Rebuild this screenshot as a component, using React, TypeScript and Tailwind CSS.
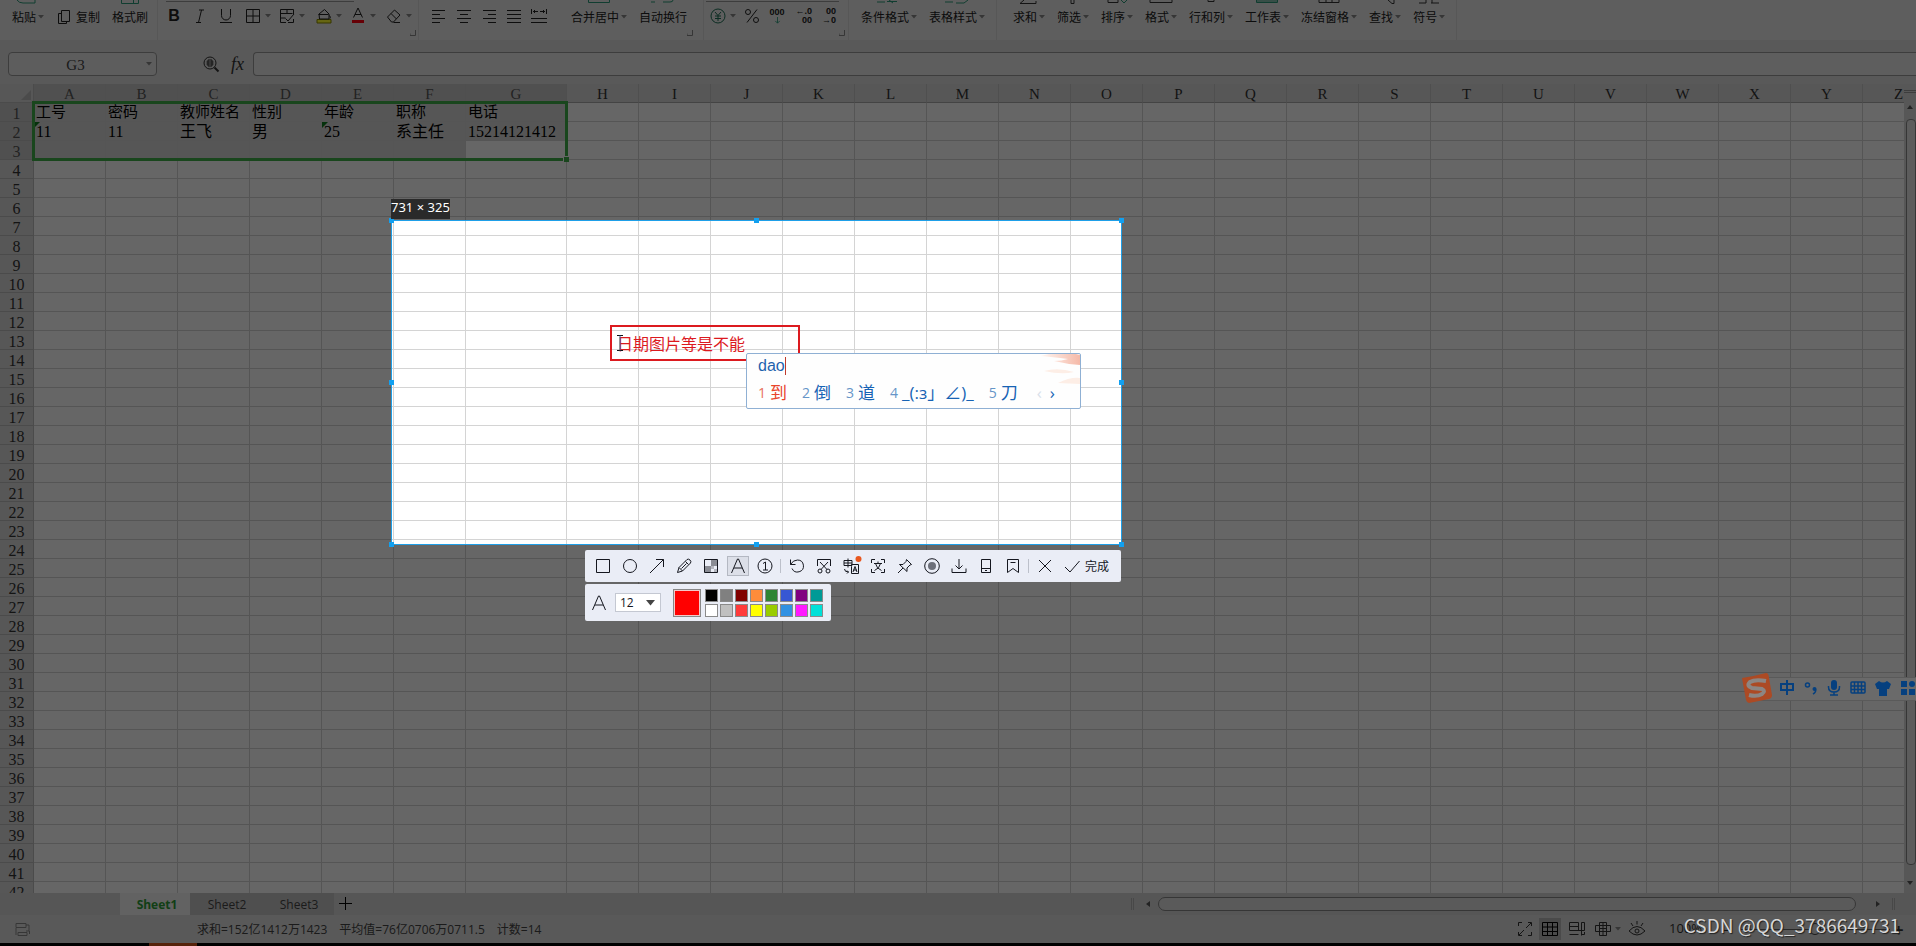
import type { ReactNode } from "react";

const columns = "ABCDEFGHIJKLMNOPQRSTUVWXYZ".split("");
const rowCount = 42;

const cells: Record<string, string> = {
  A1: "工号",
  B1: "密码",
  C1: "教师姓名",
  D1: "性别",
  E1: "年龄",
  F1: "职称",
  G1: "电话",
  A2: "11",
  B2: "11",
  C2: "王飞",
  D2: "男",
  E2: "25",
  F2: "系主任",
  G2: "15214121412",
};

const textNumbers = ["A2", "E2"];

const swatches = [
  "bg-black",
  "bg-[#808080]",
  "bg-[#800000]",
  "bg-[#ff8c3a]",
  "bg-[#2e8533]",
  "bg-[#3757d3]",
  "bg-[#800080]",
  "bg-[#009a96]",
  "bg-white",
  "bg-[#c0c0c0]",
  "bg-[#ff3b3b]",
  "bg-[#ffff00]",
  "bg-[#99cc00]",
  "bg-[#3191e2]",
  "bg-[#ff19ff]",
  "bg-[#00e0d8]",
];

type IconProps = { children: ReactNode; size?: number; className?: string };

const Icon = ({ children, size = 16, className = "" }: IconProps) => (
  <svg
    width={size}
    height={size}
    viewBox="0 0 16 16"
    fill="none"
    stroke="currentColor"
    strokeWidth="1"
    className={`shrink-0 overflow-visible ${className}`}
  >
    {children}
  </svg>
);

const Arrow = () => (
  <svg width="6" height="4" viewBox="0 0 6 4" className="shrink-0 fill-[#888]">
    <path d="M0 0h6L3 3.500z" />
  </svg>
);

const Corner = () => (
  <svg width="6" height="6" viewBox="0 0 6 6" fill="none" stroke="#888" className="mb-1 shrink-0 self-end">
    <path d="M0 3.500V5.500H5.500V0" />
  </svg>
);

const Divider = () => <div className="h-10 w-px shrink-0 bg-[#dadada]" />;

type TallProps = { label: string; arrow?: boolean; children?: ReactNode };

const Tall = ({ label, arrow = true, children }: TallProps) => (
  <button className="flex h-10 shrink-0 flex-col">
    <svg width="24" height="4" viewBox="0 0 24 4" fill="none" stroke="#333" className="self-center">
      {children}
    </svg>
    <span className="mt-1 flex items-center gap-0.5 leading-[18px] whitespace-nowrap">
      {label}
      {arrow && <Arrow />}
    </span>
  </button>
);

type ToolProps = { label: string; width: string; arrow?: boolean; children: ReactNode };

const Tool = ({ label, width, arrow, children }: ToolProps) => (
  <button aria-label={label} className={`flex h-7 shrink-0 items-center gap-1 ${width}`}>
    {children}
    {arrow && <Arrow />}
  </button>
);

const Ribbon = () => (
  <div className="flex h-10 shrink-0 overflow-hidden bg-[#ebebeb] text-xs text-[#222]">
    <div className="flex w-[157px] shrink-0 pl-3">
      <Tall label="粘贴">
        <path d="M1 0q2 3 6 3h12V0" stroke="#2a9a78" />
      </Tall>
      <button className="ml-3 flex h-[34px] items-center gap-1">
        <Icon>
          <path d="M5.500 1.500h8v11h-8zM5.500 4.500h-3v10h8v-2" />
        </Icon>
        复制
      </button>
      <div className="ml-3">
        <Tall label="格式刷" arrow={false}>
          <path d="M3.500 0v3.500h17V0M15.500 0v3" stroke="#2a9a78" />
        </Tall>
      </div>
    </div>
    <Divider />
    <div className="flex w-[260px] shrink-0">
      <div className="flex w-[252px] shrink-0 flex-col pl-2">
        <div className="h-[2px] w-[188px] shrink-0 border-b border-[#999]" />
        <div className="flex w-[250px]">
          <Tool label="加粗" width="w-[26px]">
            <b className="w-4 text-center font-['Liberation_Sans'] text-base">B</b>
          </Tool>
          <Tool label="倾斜" width="w-[26px]">
            <Icon>
              <path d="M7 2h5M4 14.500h5M9.500 2l-3 12.500" />
            </Icon>
          </Tool>
          <Tool label="下划线" width="w-[27px]">
            <Icon>
              <path d="M3.500 1v6.500a4.500 4.500 0 0 0 9 0V1M2 14.500h12" />
            </Icon>
          </Tool>
          <Tool label="边框" width="w-[34px]" arrow>
            <Icon>
              <path d="M1.500 1.500h13v13h-13zM8 1.500v13M1.500 8h13" />
            </Icon>
          </Tool>
          <Tool label="单元格样式" width="w-[37px]" arrow>
            <Icon>
              <path d="M14.500 6V1.500H1.500v13H7M1.500 5.500h12M1.500 10h5M8 1.500v4M15 6l-6 7-2.500-2.500M9 14.500h5.500V11" />
            </Icon>
          </Tool>
          <Tool label="填充颜色" width="w-[34px]" arrow>
            <Icon>
              <path d="M1 11.500h14v3.500H1z" fill="#ffff30" stroke="#888800" />
              <path d="M3 6l5.500-4.500 4.500 4.500v5H3.500zM2.500 6.500h10M13.500 7.500q1.500 2 .5 3" />
            </Icon>
          </Tool>
          <Tool label="字体颜色" width="w-[36px]" arrow>
            <Icon>
              <path d="M3.500 9.500L8 0l4.500 9.500M5 6.500h6" />
              <path d="M2 12h12v3H2z" fill="#ff0010" stroke="none" />
            </Icon>
          </Tool>
          <Tool label="清除" width="w-[27px]" arrow>
            <Icon>
              <path d="M1.500 9L8.500 2l5.500 5-6.500 7H5.500zM5 5.500l5.500 5.500M7.500 14.500H14" />
            </Icon>
          </Tool>
        </div>
      </div>
      <Corner />
    </div>
    <Divider />
    <div className="flex w-[284px] shrink-0">
      <div className="flex w-[152px] shrink-0 pt-0.5 pl-3">
        <Tool label="左对齐" width="w-[25px]">
          <Icon>
            <path d="M1 2.500h13M1 6.500h8M1 10.500h13M1 14.500h8" />
          </Icon>
        </Tool>
        <Tool label="居中" width="w-[25px]">
          <Icon>
            <path d="M1 2.500h14M4 6.500h8M1 10.500h14M4 14.500h8" />
          </Icon>
        </Tool>
        <Tool label="右对齐" width="w-[25px]">
          <Icon>
            <path d="M2 2.500h13M7 6.500h8M2 10.500h13M7 14.500h8" />
          </Icon>
        </Tool>
        <Tool label="两端对齐" width="w-[25px]">
          <Icon>
            <path d="M1 2.500h14M1 6.500h14M1 10.500h14M1 14.500h14" />
          </Icon>
        </Tool>
        <Tool label="分散对齐" width="w-[25px]">
          <Icon>
            <path d="M.5 1v5M15.500 1v5M2 3.500h5M9 3.500h5M4 2L2.500 3.500 4 5M12 2l1.500 1.500L12 5M0 10.500h16M0 14.500h16" />
          </Icon>
        </Tool>
      </div>
      <Tall label="合并居中">
        <path d="M1.500 0v2.500h21V0" stroke="#2a9a78" />
      </Tall>
      <div className="ml-3 w-12">
        <Tall label="自动换行" arrow={false}>
          <path d="M0 2h4M12 2h7q3 0 3-2" stroke="#2a9a78" />
        </Tall>
      </div>
      <Corner />
    </div>
    <Divider />
    <div className="flex w-[144px] shrink-0">
      <div className="flex w-[135px] shrink-0 flex-col pl-0.5">
        <div className="h-[2px] shrink-0 border-b border-[#999]" />
        <div className="flex pl-1">
          <Tool label="货币" width="w-[34px]" arrow>
            <Icon className="text-[#1d6e55]">
              <circle cx="8" cy="8" r="7" />
              <path d="M5 4l3 3.500L11 4M8 7.500V13M5 8h6M5 10.500h6" />
            </Icon>
          </Tool>
          <Tool label="百分比" width="w-[22px]">
            <Icon>
              <path d="M13 1.500L3 14.500" />
              <circle cx="4" cy="4" r="2.500" />
              <circle cx="12" cy="12" r="2.500" />
            </Icon>
          </Tool>
          <button className="flex h-7 w-[22px] flex-col items-center justify-center font-['Liberation_Sans'] text-[9px] leading-[9px] font-bold">
            <span>000</span>
            <Icon size={7} className="text-[#2a9a78]">
              <path d="M8 0v14M3 9l5 5 5-5" strokeWidth="2" />
            </Icon>
          </button>
          <button className="flex h-7 w-6 flex-col items-end justify-center font-['Liberation_Sans'] text-[9px] leading-[9px] font-bold">
            <span>←.0</span>
            <span>00</span>
          </button>
          <button className="flex h-7 w-6 flex-col items-end justify-center font-['Liberation_Sans'] text-[9px] leading-[9px] font-bold">
            <span>00</span>
            <span>→0</span>
          </button>
        </div>
      </div>
      <Corner />
    </div>
    <Divider />
    <div className="flex w-[147px] shrink-0 gap-3 pl-3">
      <Tall label="条件格式">
        <path d="M0 2h8M10 1.500h10M12 0l4 3" stroke="#2a9a78" />
      </Tall>
      <Tall label="表格样式">
        <path d="M0 2h8M11 3h8l4-3" stroke="#2a9a78" />
      </Tall>
    </div>
    <Divider />
    <div className="flex w-[459px] shrink-0 gap-3 pl-4">
      <Tall label="求和">
        <path d="M7 0L3 3.500h16V1" />
      </Tall>
      <Tall label="筛选">
        <path d="M10 0v3.500h3V0" />
      </Tall>
      <Tall label="排序">
        <path d="M3 0v2.500h10V0" />
        <path d="M16 0l3 3 3-3" stroke="#2a9a78" />
      </Tall>
      <Tall label="格式">
        <path d="M1 0v2.500h22V0" />
      </Tall>
      <Tall label="行和列">
        <path d="M9 0v1.500h6V0" />
      </Tall>
      <Tall label="工作表">
        <path d="M1.500 0v2.500h21V0M1 1h22" stroke="#2a9a78" />
      </Tall>
      <Tall label="冻结窗格">
        <path d="M2 0v2.500h20V0M9 0v2M15 0v2" />
      </Tall>
      <Tall label="查找">
        <path d="M15 0l4 3.500h2V0" />
      </Tall>
      <Tall label="符号">
        <path d="M2 3h7V0M14 3h8M15 3V0" />
      </Tall>
    </div>
    <Divider />
  </div>
);

const FormulaBar = () => (
  <div className="flex h-11 shrink-0 items-center bg-[#dedede] pt-1 pl-2 text-[#333]">
    <div className="flex h-6 w-[149px] items-center rounded border border-[#999] bg-[#e8e8e8] pr-1">
      <input
        aria-label="名称框"
        defaultValue="G3"
        className="w-0 flex-1 pt-0.5 pr-1 text-center font-['Liberation_Serif'] text-[15px] text-[#444] outline-none"
      />
      <Arrow />
    </div>
    <button aria-label="浏览公式" className="ml-[46px]">
      <Icon>
        <circle cx="7" cy="7" r="6" />
        <path d="M11.500 11.500l4 4" strokeWidth="2" />
        <path d="M3.500 6h7M3.500 8h7M5 4h4v6H5z" />
      </Icon>
    </button>
    <button className="ml-3 w-[22px] text-left font-['Liberation_Serif'] text-lg leading-5 italic">fx</button>
    <input
      aria-label="编辑栏"
      className="h-6 min-w-0 flex-1 rounded-l border border-r-0 border-[#999] bg-[#ececec] outline-none"
    />
  </div>
);

const isSelected = (column: string, row: number) => row <= 3 && column <= "G" && !(column === "G" && row === 3);

const Sheet = () => (
  <div className="flex min-h-0 flex-1 bg-[#dadada]">
    <div className="relative min-w-0 flex-1 overflow-hidden">
      <table className="w-[1935px] table-fixed border-separate border-spacing-0 bg-white">
        <colgroup>
          <col className="w-[34px]" />
          {columns.map((column) => (
            <col key={column} className={column === "G" ? "w-[101px]" : "w-[72px]"} />
          ))}
        </colgroup>
        <thead>
          <tr className="font-['Liberation_Serif'] text-[15px] leading-4 text-[#333]">
            <th className="h-[19px] border-r border-b border-[#bbb] bg-[#dadada] p-0">
              <svg width="10" height="10" viewBox="0 0 10 10" className="mt-1 mr-0.5 ml-auto fill-[#bbb]">
                <path d="M10 0v10H0z" />
              </svg>
            </th>
            {columns.map((column) => (
              <th
                key={column}
                className={`h-[19px] border-r border-b border-r-[#c6c6c6] border-b-[#aaa] p-0 pt-0.5 font-normal ${
                  column <= "G" ? "bg-[#c8c8c8] text-[#555]" : "bg-[#dadada]"
                }`}
              >
                {column}
              </th>
            ))}
          </tr>
        </thead>
        <tbody>
          {Array.from({ length: rowCount }, (_, index) => index + 1).map((row) => (
            <tr key={row}>
              <th
                className={`h-[19px] border-r border-b border-[#bbb] p-0 pt-1 font-['Liberation_Serif'] text-base leading-[14px] font-normal ${
                  row <= 3 ? "bg-[#c8c8c8] text-[#555]" : "bg-[#dadada] text-[#333]"
                }`}
              >
                {row}
              </th>
              {columns.map((column) => {
                const id = column + row;
                return (
                  <td
                    key={id}
                    className={`relative h-[19px] border-r border-b border-[#d4d4d4] p-0 pl-0.5 font-['Liberation_Serif','Noto_Sans_CJK_SC',serif] leading-4 whitespace-nowrap ${
                      row === 2 ? "pt-0.5 text-base leading-4" : "text-[15px]"
                    } ${isSelected(column, row) ? "bg-[#d8d8d8]" : ""}`}
                  >
                    {cells[id]}
                    {textNumbers.includes(id) && (
                      <svg width="6" height="6" viewBox="0 0 6 6" className="absolute top-0 left-0 fill-[#107c20]">
                        <path d="M0 0h6L0 6z" />
                      </svg>
                    )}
                  </td>
                );
              })}
            </tr>
          ))}
        </tbody>
      </table>
      <div className="absolute top-[17px] left-8 h-[60px] w-[536px] border-3 border-[#3fae49]">
        <div className="absolute -right-1 -bottom-1 size-[6px] border-t border-l border-white bg-[#3fae49]" />
      </div>
    </div>
    <div className="flex w-3 shrink-0 flex-col items-center bg-[#dadada] pt-1.5">
      <div className="h-[3px] w-full border-y border-[#999]" />
      <svg width="6" height="4" viewBox="0 0 6 4" className="mt-3 fill-[#555]">
        <path d="M0 4h6L3 0z" />
      </svg>
      <div className="mt-2.5 mb-4 ml-0.5 w-2.5 flex-1 rounded border border-[#888] bg-[#e6e6e6]" />
      <svg width="6" height="4" viewBox="0 0 6 4" className="mb-2 fill-[#555]">
        <path d="M0 0h6L3 4z" />
      </svg>
    </div>
  </div>
);

const SheetTabs = () => (
  <div className="flex h-[22px] shrink-0 items-center bg-[#d8d8d8] pl-[120px] font-['Open_Sans'] text-xs text-[#444]">
    <button className="h-full w-[70px] bg-[#f4f4f4] pt-0.5 pl-1 font-bold text-[#2e9e38]">Sheet1</button>
    <button className="h-full w-[74px] bg-[#c6c6c6] pt-0.5">Sheet2</button>
    <button className="h-full w-[70px] bg-[#c6c6c6] pt-0.5">Sheet3</button>
    <button aria-label="新建工作表" className="ml-[5px] text-black">
      <Icon>
        <path d="M6.500 1v13M0 7.500h13" />
      </Icon>
    </button>
    <div className="ml-auto flex w-[785px] items-center">
      <div className="h-3 w-[3px] border-x border-[#b4b4b4]" />
      <svg width="4" height="6" viewBox="0 0 4 6" className="ml-3 fill-[#555]">
        <path d="M4 0v6L0 3z" />
      </svg>
      <div className="ml-2 h-3.5 w-[698px] rounded-full border border-[#888] bg-[#e0e0e0]" />
      <svg width="4" height="6" viewBox="0 0 4 6" className="ml-5 fill-[#555]">
        <path d="M0 0v6l4-3z" />
      </svg>
      <div className="ml-3 h-3 w-[3px] border-x border-[#b4b4b4]" />
    </div>
  </div>
);

const StatusBar = () => (
  <div className="flex h-7 shrink-0 items-center bg-[#dedede] text-[#333]">
    <button aria-label="宏" className="ml-[15px] w-[182px] text-[#888]">
      <Icon>
        <path d="M1 2.500h10v4H1zM3 11.500h9v3H3zM1 7v7M11 4h3v6h-3M14.500 10v3" />
      </Icon>
    </button>
    <div className="flex gap-3 pt-0.5 font-['Open_Sans','Noto_Sans_CJK_SC',sans-serif] text-xs text-[#444]">
      <span>求和=152亿1412万1423</span>
      <span>平均值=76亿0706万0711.5</span>
      <span>计数=14</span>
    </div>
    <div className="ml-auto flex w-[403px] items-center">
      <button aria-label="全屏" className="w-[26px] pl-1">
        <Icon>
          <path d="M1.500 5V1.500H5M11 1.500h3.500V5M1.500 11v3.500H5M11 14.500h3.500V11M9 7l5-5M7 9l-5 5" />
        </Icon>
      </button>
      <button aria-label="普通视图" className="flex h-[22px] w-[22px] items-center justify-center bg-[#b8b8b8] text-black">
        <Icon>
          <path d="M.5 1.500h15v13H.5zM.5 6h15M.5 10.500h15M5.500 1.500v13M10.500 1.500v13" />
        </Icon>
      </button>
      <button aria-label="分页预览" className="ml-2">
        <Icon>
          <path d="M9.500 1.500H.5v8h15v-8h-3M.5 5.500h9M9.500 1.500v8M.5 13.500h9M12.500 1.500v13M15.500 11v2.500h-3" />
        </Icon>
      </button>
      <button aria-label="页面布局" className="ml-2.5 flex items-center gap-1">
        <Icon>
          <path d="M4.500 1.500h7v13h-7zM.5 4.500h15v6H.5zM8 1.500v13M4 7.500h8" />
        </Icon>
        <Arrow />
      </button>
      <button aria-label="护眼模式" className="ml-2">
        <Icon>
          <path d="M0 10q8-9 16 0-8 8-16 0zM8 0v3.500M2 2l2 3M14 2l-2 3" />
          <circle cx="8" cy="10" r="2" />
        </Icon>
      </button>
      <span className="ml-6 w-[54px] font-['Open_Sans'] text-[13px]">100%</span>
      <span>−</span>
      <input
        type="range"
        aria-label="显示比例"
        className="ml-2 h-px w-[150px] appearance-none bg-[#666] [&::-webkit-slider-thumb]:size-3 [&::-webkit-slider-thumb]:appearance-none [&::-webkit-slider-thumb]:rounded-full [&::-webkit-slider-thumb]:border [&::-webkit-slider-thumb]:border-[#444] [&::-webkit-slider-thumb]:bg-[#dedede]"
      />
      <span className="ml-1 font-bold">+</span>
    </div>
  </div>
);

const ImeBar = () => (
  <div className="absolute top-[673px] right-0 flex h-[30px] w-[175px] items-center text-[#06407f]">
    <div className="absolute top-1 right-0 left-4 h-6 border-y border-[#5a5a5a] bg-[#6a6a6a]" />
    <svg width="32" height="30" viewBox="0 0 32 30" className="relative shrink-0">
      <path d="M1 5Q14 3 25 0q2 0 2.500 2l3.500 20q0 3-3 4L8 30q-2 0-3-3z" fill="#ac4a24" />
      <path
        d="M25 8Q14 6 9 9q-4 4 2 6l10 1q4 2 0 5-5 3-13 1"
        fill="none"
        stroke="#8c8683"
        strokeWidth="4"
      />
    </svg>
    <div className="relative flex flex-1 items-center justify-between pl-1.5">
      <svg width="16" height="16" viewBox="0 0 16 16" fill="none" stroke="currentColor" strokeWidth="2">
        <path d="M2 4h12v6H2zM8 0v15" />
      </svg>
      <svg width="14" height="14" viewBox="0 0 14 14" fill="none" stroke="currentColor" strokeWidth="1.500">
        <circle cx="3.500" cy="4" r="2" />
        <circle cx="10.500" cy="8" r="2" fill="currentColor" stroke="none" />
        <path d="M11.500 8q1 3-2.500 5" />
      </svg>
      <svg width="14" height="16" viewBox="0 0 14 16" fill="none" stroke="currentColor" strokeWidth="1.500">
        <rect x="4" y="0" width="6" height="10" rx="3" fill="currentColor" stroke="none" />
        <path d="M1.500 6v1q0 5 5.500 5t5.500-5V6M7 12v3M3 15h8" />
      </svg>
      <svg width="16" height="14" viewBox="0 0 16 14" fill="none" stroke="currentColor" strokeWidth="1.500">
        <rect x="1" y="1" width="14" height="11" rx="1" />
        <path d="M1 5h14M1 8.500h14M4.500 1v11M8 1v11M11.500 1v11" />
      </svg>
      <svg width="16" height="15" viewBox="0 0 16 15" fill="currentColor">
        <path d="M4 0q4 3 8 0l4 3-2 5h-2v7H4V8H2L0 3z" />
      </svg>
      <svg width="16" height="14" viewBox="0 0 16 14" fill="currentColor">
        <path d="M1 0h6v6H1zM1 8h6v6H1zM9 8h6v6H9z" />
        <circle cx="12" cy="3" r="3" />
      </svg>
    </div>
  </div>
);

const Candidate = ({ index, text, active }: { index: number; text: string; active?: boolean }) => (
  <button className={`flex items-center gap-1 ${active ? "text-[#e8452c]" : "text-[#1763b4]"}`}>
    <span className={`text-sm ${active ? "text-[#e8705c]" : "text-[#6695c8]"}`}>{index}</span>
    {text}
  </button>
);

const ImePopup = () => (
  <div className="absolute top-[353px] left-[746px] h-[56px] w-[335px] overflow-hidden rounded-xs border border-[#8fb0d4] bg-[#fefefe] pl-[11px] font-['Open_Sans','Noto_Sans_CJK_SC',sans-serif]">
    <svg width="40" height="32" viewBox="0 0 40 32" className="absolute top-0 right-0">
      <defs>
        <linearGradient id="petal">
          <stop offset="0" stopColor="#fff8f4" />
          <stop offset="1" stopColor="#f5b9a8" />
        </linearGradient>
      </defs>
      <path d="M0 2Q22-4 40 1v10Q26 10 14 7q8 0 14-2Q12 3 0 2z" fill="url(#petal)" />
      <path d="M4 17q14-4 30 1-12 3-30-1zM18 29q12-6 22-5v6z" fill="#fdeee6" />
    </svg>
    <div className="flex h-[23px] items-center font-['Liberation_Sans'] text-base text-[#1f63ae]">
      dao
      <span className="h-[18px] w-px bg-[#c0392b]" />
    </div>
    <div className="flex h-8 items-center gap-[15px] text-[17px]">
      <Candidate index={1} text="到" active />
      <Candidate index={2} text="倒" />
      <Candidate index={3} text="道" />
      <Candidate index={4} text="_(:з」∠)_" />
      <Candidate index={5} text="刀" />
      <div className="flex gap-2 pl-1">
        <button aria-label="上一页" className="text-[#d8e0ea]">
          ‹
        </button>
        <button aria-label="下一页" className="text-[#1763b4]">
          ›
        </button>
      </div>
    </div>
  </div>
);

const handles = [
  "-top-[3px] -left-[3px]",
  "-top-[3px] left-1/2 -ml-[3px]",
  "-top-[3px] -right-[3px]",
  "top-1/2 -left-[3px] -mt-[3px]",
  "top-1/2 -right-[3px] -mt-[3px]",
  "-bottom-[3px] -left-[3px]",
  "-bottom-[3px] left-1/2 -ml-[3px]",
  "-right-[3px] -bottom-[3px]",
];

const Snip = ({ label, active, children }: { label: string; active?: boolean; children: ReactNode }) => (
  <button aria-label={label} className="relative flex h-8 w-[27px] shrink-0 items-center justify-center">
    <span
      className={`flex h-5 w-[22px] items-center justify-center ${active ? "border border-[#b4b8c2] bg-[#dcdfe8]" : ""}`}
    >
      <Icon>{children}</Icon>
    </span>
  </button>
);

const SnipDivider = () => <div className="mx-0.5 h-3.5 w-px shrink-0 bg-[#bcc0ca]" />;

const SnipToolbar = () => (
  <div className="absolute top-[550px] left-[585px] text-[#15171f]">
    <div className="flex h-8 w-[536px] items-center rounded-xs bg-[#eaedf6] pl-1 text-xs">
      <Snip label="矩形">
        <path d="M1.500 1.500h13v13h-13z" />
      </Snip>
      <Snip label="椭圆">
        <circle cx="8" cy="8" r="6.500" />
      </Snip>
      <Snip label="箭头">
        <path d="M1 15L14.500 1.500M7 1.500h7.500V9" />
      </Snip>
      <Snip label="画笔">
        <path d="M1.500 14.500l1.500-5L11 1.500q1.500-1 3 .5t.5 3L6.500 13zM9.500 3.500l3 3M3 9.500l3.500 3.500M5.500 10.500l5-5" />
      </Snip>
      <Snip label="马赛克">
        <path d="M8 2h6v6H8zM2 8h6v6H2z" fill="#8a8c94" stroke="none" />
        <path d="M8 8h3v3H8zM11 11h3v3h-3z" fill="#b4b6be" stroke="none" />
        <path d="M1.500 1.500h13v13h-13z" />
      </Snip>
      <Snip label="文字" active>
        <path d="M1.500 15L7.500 1h1l6 14M4 10h8" />
      </Snip>
      <Snip label="序号">
        <circle cx="8" cy="8" r="7" />
        <path d="M6 5.500L8.500 4v8M6 12h5" />
      </Snip>
      <SnipDivider />
      <Snip label="撤销">
        <path d="M1.500 1.500v5h5M1.500 6.500Q4 2 8.500 2a6 6 0 1 1-5.500 8.500" />
      </Snip>
      <Snip label="长截图">
        <path d="M1.500 8V1.500h13V8M4 4l7 7.500M12 4l-7 7.500" />
        <circle cx="4" cy="13" r="2" />
        <circle cx="12" cy="13" r="2" />
      </Snip>
      <Snip label="翻译">
        <path d="M1 2.500h8v5H1zM1 5h8M5 .5v9M8.500 8.500V6.500h7v9h-7zM10 14l2-5.500 2 5.500M10.500 12h3M1.500 11q0 3 4 3M4 12.500L5.500 14 4 15.500" />
        <circle cx="15.500" cy="1" r="3" fill="#e8571f" stroke="none" />
      </Snip>
      <Snip label="提取文字">
        <path d="M1.500 5V1.500H5M11 1.500h3.500V5M1.500 11v3.500H5M11 14.500h3.500V11M4 5.500h8M8 3.500v2M10.500 5.500q-1 5-6 7M5.500 5.500q1 5 6 7" />
      </Snip>
      <Snip label="钉在桌面">
        <path d="M9.500 1.500l5 5-1.500.5-3 3v3.500L2.500 6.500H6l3-3zM6 10l-5 5" />
      </Snip>
      <Snip label="录屏">
        <circle cx="8" cy="8" r="7.300" />
        <circle cx="8" cy="8" r="4" fill="#6d707a" stroke="none" />
      </Snip>
      <Snip label="下载">
        <path d="M8 1v10M4.500 7.500L8 11l3.500-3.500M1 10.500v4h14v-4" />
      </Snip>
      <Snip label="发送到手机">
        <path d="M3.500 1.500h9v13h-9zM3.500 10.500h9M7 12.500h2" />
      </Snip>
      <Snip label="收藏">
        <path d="M2.500 1.500h11v13L8 10.500l-5.500 4zM5.500 4.500h5" />
      </Snip>
      <SnipDivider />
      <Snip label="关闭">
        <path d="M2 2l12 12M14 2L2 14" />
      </Snip>
      <button className="flex items-center gap-[5px] pl-1.5 whitespace-nowrap">
        <Icon>
          <path d="M1 9l5 5L15.500 3" />
        </Icon>
        完成
      </button>
    </div>
    <div className="mt-0.5 flex h-[37px] w-[246px] items-center rounded-xs bg-[#eaedf6] pl-1.5">
      <Icon>
        <path d="M1.500 15L7.500 1h1l6 14M4 10h8" />
      </Icon>
      <div className="relative ml-2">
        <select
          aria-label="字号"
          className="block h-[19px] w-[46px] appearance-none border border-[#c4c8d2] bg-white pl-1 font-['Open_Sans'] text-xs leading-4"
        >
          <option>12</option>
        </select>
        <svg width="9" height="6" viewBox="0 0 9 6" className="pointer-events-none absolute top-[7px] right-[6px] fill-[#444]">
          <path d="M0 0h9L4.500 5.500z" />
        </svg>
      </div>
      <div className="ml-3 size-7 border border-[#888] bg-[#ff0000] outline -outline-offset-2 outline-[#f4c8c8]" />
      <div className="ml-1 grid grid-cols-8 gap-0.5">
        {swatches.map((color) => (
          <button key={color} aria-label="颜色" className={`size-[13px] border border-[#8a8a8a] ${color}`} />
        ))}
      </div>
    </div>
  </div>
);

const Capture = () => (
  <>
    <div className="absolute top-[220px] left-[391px] h-[325px] w-[731px] border border-[#1e9fe8] shadow-[0_0_0_3000px_rgba(0,0,0,0.6)]">
      {handles.map((place) => (
        <span key={place} className={`absolute size-[5px] bg-[#12a0f0] ${place}`} />
      ))}
    </div>
    <div className="absolute top-[199px] left-[391px] h-5 bg-[#2a2a2a] font-['Noto_Sans'] text-[13px] leading-[17px] text-white">
      731 × 325
    </div>
    <div className="absolute top-[325px] left-[610px] flex h-9 w-[190px] items-center border-2 border-[#dc1a1f] px-[5px]">
      <input
        aria-label="标注文字"
        defaultValue="日期图片等是不能"
        className="w-full text-base text-[#dc1a1f] outline-none"
      />
      <svg width="8" height="16" viewBox="0 0 8 16" fill="none" stroke="#111" className="absolute left-[4px]">
        <path d="M1 .5h6M1 15.500h6" />
        <path d="M4 .5v15" stroke="#2c5fa8" />
      </svg>
    </div>
  </>
);

const App = () => {
  return (
    <div className="relative flex h-screen flex-col overflow-hidden bg-black font-['Noto_Sans_CJK_SC',sans-serif]">
      <Ribbon />
      <FormulaBar />
      <Sheet />
      <SheetTabs />
      <StatusBar />
      <div className="h-[3px] shrink-0 bg-black pl-[149px]">
        <div className="h-full w-12 bg-[#d8591c]" />
      </div>
      <Capture />
      <ImePopup />
      <SnipToolbar />
      <ImeBar />
      <p className="absolute right-4 bottom-[7px] text-[19px] leading-7 text-[#d6d6d6] [text-shadow:1px_1px_1px_#222]">
        CSDN @QQ_3786649731
      </p>
    </div>
  );
};

export default App;
